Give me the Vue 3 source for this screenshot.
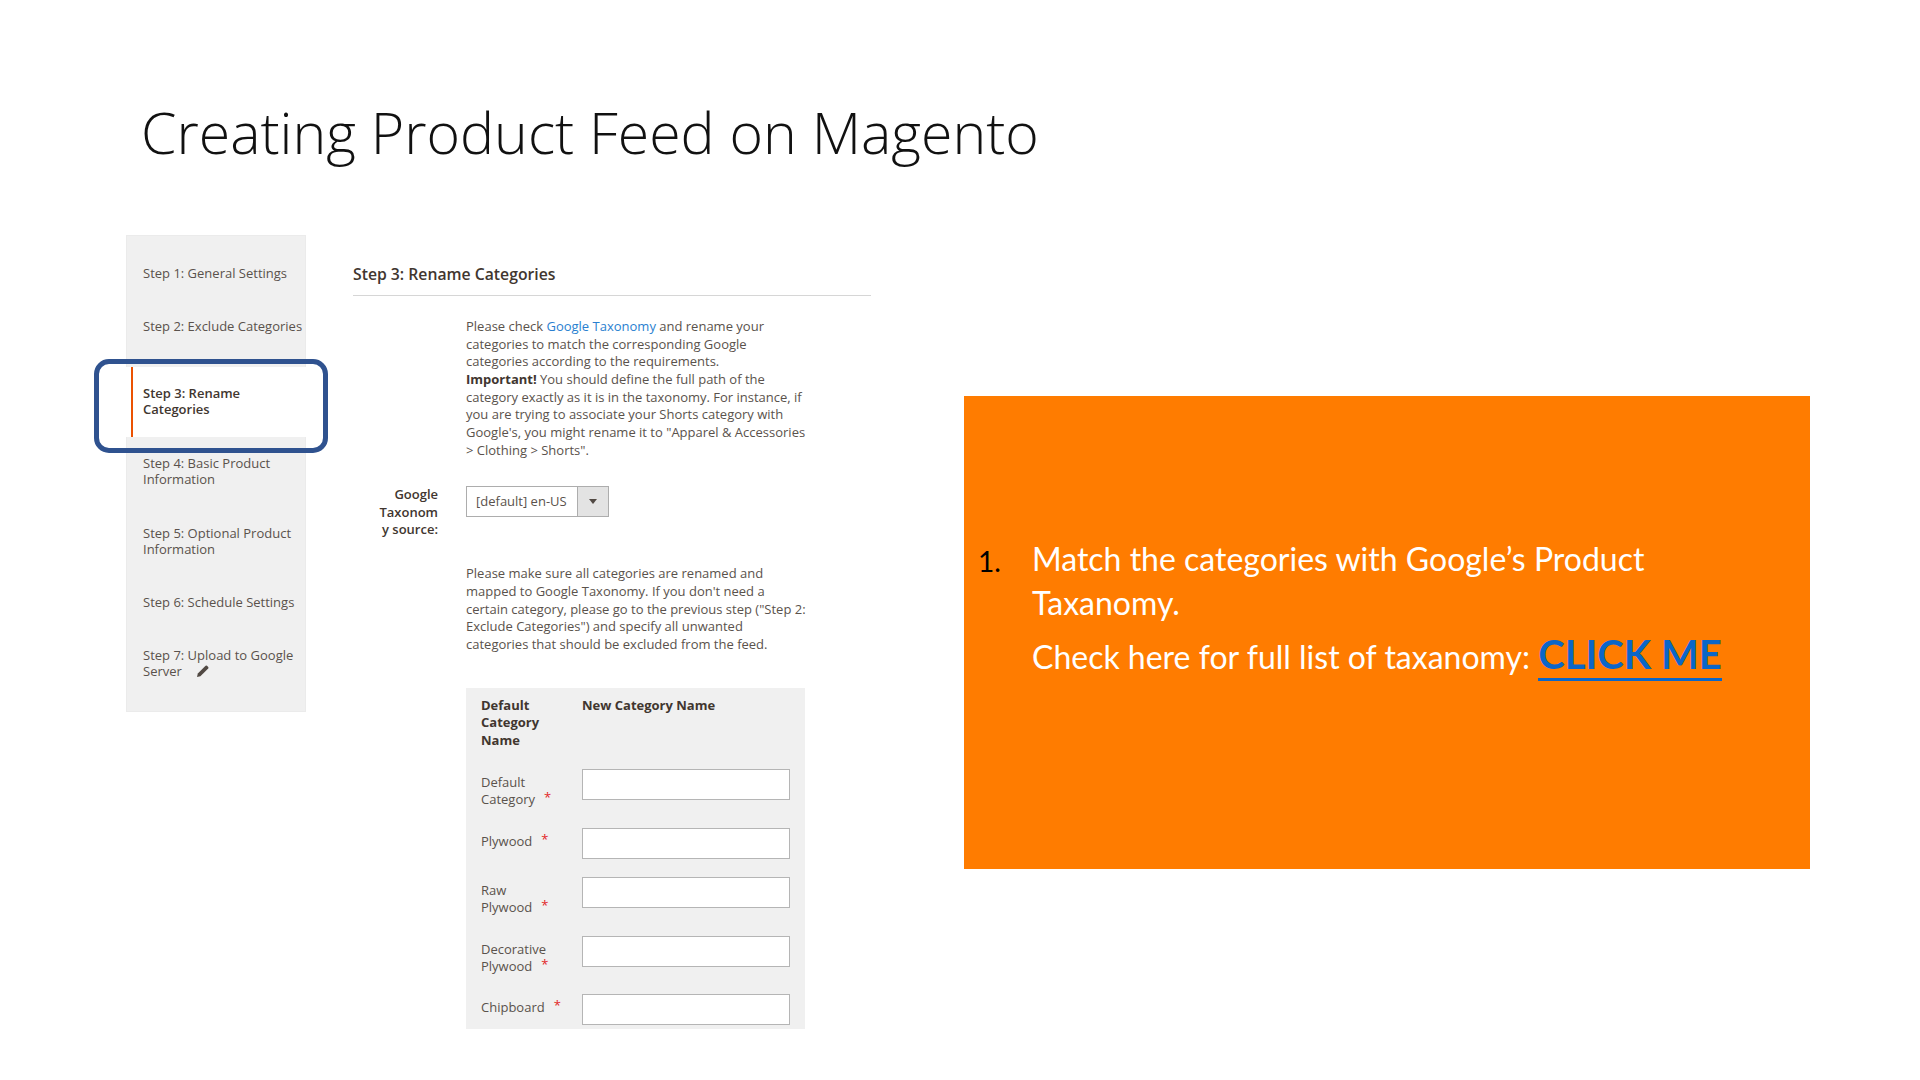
<script setup>
const steps = [
  { id: 1, lines: ['Step 1: General Settings'], h: 53 },
  { id: 2, lines: ['Step 2: Exclude Categories'], h: 53 },
  { id: 3, lines: ['Step 3: Rename', 'Categories'], h: 70, active: true },
  { id: 4, lines: ['Step 4: Basic Product', 'Information'], h: 70 },
  { id: 5, lines: ['Step 5: Optional Product', 'Information'], h: 69 },
  { id: 6, lines: ['Step 6: Schedule Settings'], h: 53 },
  { id: 7, lines: ['Step 7: Upload to Google', 'Server'], h: 70, edit: true },
]
const rows = [
  { lines: ['Default', 'Category'], h: 59 },
  { lines: ['Plywood'], h: 49 },
  { lines: ['Raw', 'Plywood'], h: 59 },
  { lines: ['Decorative', 'Plywood'], h: 58 },
  { lines: ['Chipboard'], h: 34 },
]
</script>

<template>
  <div class="slide">
    <h1 class="title">Creating Product Feed on Magento</h1>
    <div class="content">
      <nav class="steps">
        <div
          v-for="s in steps"
          :key="s.id"
          class="step"
          :class="{ active: s.active }"
          :style="{ height: s.h + 'px' }"
        >
          <div class="step-text">
            <div class="step-inner">
              <div v-for="l in s.lines" :key="l" class="step-line">
                {{ l }}
                <svg v-if="s.edit && l === 'Server'" class="pencil" viewBox="0 0 14 14" width="14" height="14">
                  <path d="M1 13l.8-3.4L9.6 1.8a1 1 0 0 1 1.4 0l1.2 1.2a1 1 0 0 1 0 1.4L4.4 12.2z" fill="#514943" />
                </svg>
              </div>
            </div>
          </div>
        </div>
        <div class="highlight"></div>
      </nav>

      <main class="panel">
        <h2 class="panel-title">Step 3: Rename Categories</h2>
        <div class="body">
          <p class="note">
            Please check <a class="link">Google Taxonomy</a> and rename your<br />
            categories to match the corresponding Google<br />
            categories according to the requirements.<br />
            <strong>Important!</strong> You should define the full path of the<br />
            category exactly as it is in the taxonomy. For instance, if<br />
            you are trying to associate your Shorts category with<br />
            Google's, you might rename it to "Apparel &amp; Accessories<br />
            &gt; Clothing &gt; Shorts".
          </p>
          <div class="field">
            <label class="field-label">Google<br />Taxonom<br />y source:</label>
            <div class="select">
              <span class="select-value">[default] en-US</span>
              <span class="select-btn"><i class="caret"></i></span>
            </div>
          </div>
          <p class="note second">
            Please make sure all categories are renamed and<br />
            mapped to Google Taxonomy. If you don't need a<br />
            certain category, please go to the previous step ("Step 2:<br />
            Exclude Categories") and specify all unwanted<br />
            categories that should be excluded from the feed.
          </p>
          <div class="table">
            <div class="thead">
              <div class="th-a">Default<br />Category<br />Name</div>
              <div class="th-b">New Category Name</div>
            </div>
            <div v-for="r in rows" :key="r.lines.join()" class="tr" :style="{ height: r.h + 'px' }">
              <div class="td-label">
                <div v-for="(l, i) in r.lines" :key="l">
                  {{ l }}<span v-if="i === r.lines.length - 1" class="star">*</span>
                </div>
              </div>
              <div class="input"></div>
            </div>
          </div>
        </div>
      </main>

      <aside class="callout">
        <div class="callout-item">
          <span class="num">1.</span>
          <div class="callout-text">
            <p class="c-line">Match the categories with Google’s Product Taxanomy.</p>
            <p class="c-line c-last">Check here for full list of taxanomy: <a class="click">CLICK ME</a></p>
          </div>
        </div>
      </aside>
    </div>
  </div>
</template>

<style>
html, body { margin: 0; background: #fff; }
</style>

<style scoped>
.slide {
  width: 1920px;
  height: 1080px;
  box-sizing: border-box;
  background: #fff;
  overflow: hidden;
  padding-top: 96px;
  font-family: "Open Sans", sans-serif;
}
.title {
  margin: 0 0 0 141px;
  height: 139px;
  font-weight: 300;
  font-size: 57.2px;
  line-height: 72px;
  color: #111;
}
.content {
  display: flex;
  align-items: flex-start;
  margin-left: 126px;
}
.steps {
  position: relative;
  width: 180px;
  height: 477px;
  flex: none;
  padding-top: 12px;
  box-sizing: border-box;
  background: #f0f0f0;
  box-shadow: inset 0 0 0 1px #ebebeb;
  font-size: 13px;
  line-height: 15.6px;
  color: #5a524c;
}
.step {
  display: flex;
  align-items: center;
  padding-left: 17px;
  white-space: nowrap;
}
.step.active {
  margin-top: 14px;
  padding-left: 5px;
  align-items: stretch;
  background: #fff;
  color: #41362f;
  font-weight: 600;
}
.step.active .step-text {
  display: flex;
  align-items: center;
  border-left: 2px solid #eb5202;
  padding-left: 10px;
}
.pencil {
  margin-left: 11px;
  vertical-align: -2px;
}
.highlight {
  position: absolute;
  left: -32px;
  top: 124px;
  width: 224px;
  height: 84px;
  border: 5px solid #2f528f;
  border-radius: 15px;
}
.panel {
  width: 518px;
  flex: none;
  margin-left: 47px;
  color: #5a524c;
  font-size: 13px;
  line-height: 17.65px;
}
.panel-title {
  margin: 28px 0 0;
  height: 32px;
  border-bottom: 1px solid #d6d6d6;
  font-size: 15.75px;
  font-weight: 600;
  line-height: 22px;
  color: #41362f;
}
.body { padding-left: 113px; }
.note { margin: 22px 0 0; white-space: nowrap; }
.note.second { margin-top: 26px; }
.link { color: #2a7fd0; }
.note strong { font-weight: 700; color: #41362f; }
.field {
  position: relative;
  margin-top: 27px;
  height: 53px;
}
.field-label {
  position: absolute;
  right: 100%;
  top: 0;
  margin-right: 28px;
  text-align: right;
  font-weight: 600;
  white-space: nowrap;
  color: #41362f;
  line-height: 17.6px;
}
.select {
  display: flex;
  width: 143px;
  height: 31px;
  box-sizing: border-box;
  border: 1px solid #adadad;
  background: #fff;
}
.select-value {
  flex: 1;
  padding-left: 9px;
  line-height: 28px;
}
.select-btn {
  width: 30px;
  flex: none;
  border-left: 1px solid #adadad;
  background: #e3e3e3;
  display: flex;
  align-items: center;
  justify-content: center;
}
.caret {
  width: 0;
  height: 0;
  border-left: 4px solid transparent;
  border-right: 4px solid transparent;
  border-top: 5px solid #514943;
}
.table {
  margin-top: 34px;
  width: 339px;
  height: 341px;
  box-sizing: border-box;
  background: #f0f0f0;
  padding: 9px 15px 0;
}
.thead {
  display: flex;
  height: 72px;
  font-weight: 700;
  color: #41362f;
}
.th-a { width: 101px; flex: none; }
.tr { display: flex; }
.td-label { width: 101px; flex: none; padding-top: 5px; box-sizing: border-box; }
.star { color: #e22626; margin-left: 9px; position: relative; top: -2px; }
.input {
  width: 209px;
  height: 31px;
  box-sizing: border-box;
  border: 1px solid #b5b5b5;
  background: #fff;
}
.callout {
  width: 846px;
  height: 473px;
  flex: none;
  margin: 161px 0 0 93px;
  background: #ff7c00;
  box-sizing: border-box;
  padding: 141px 60px 0 14px;
  font-family: Lato, sans-serif;
  font-weight: 400;
  font-size: 32px;
  line-height: 44px;
  color: #fff;
}
.callout-item { display: flex; }
.num {
  width: 54px;
  flex: none;
  padding-top: 2px;
  color: #000;
  font-size: 28px;
}
.c-line { margin: 0; }
.c-last { margin-top: 9px; }
.click {
  color: #0b66c8;
  font-weight: 700;
  font-size: 40px;
  border-bottom: 3px solid #0b66c8;
  text-decoration: none;
  line-height: 1;
}
</style>
